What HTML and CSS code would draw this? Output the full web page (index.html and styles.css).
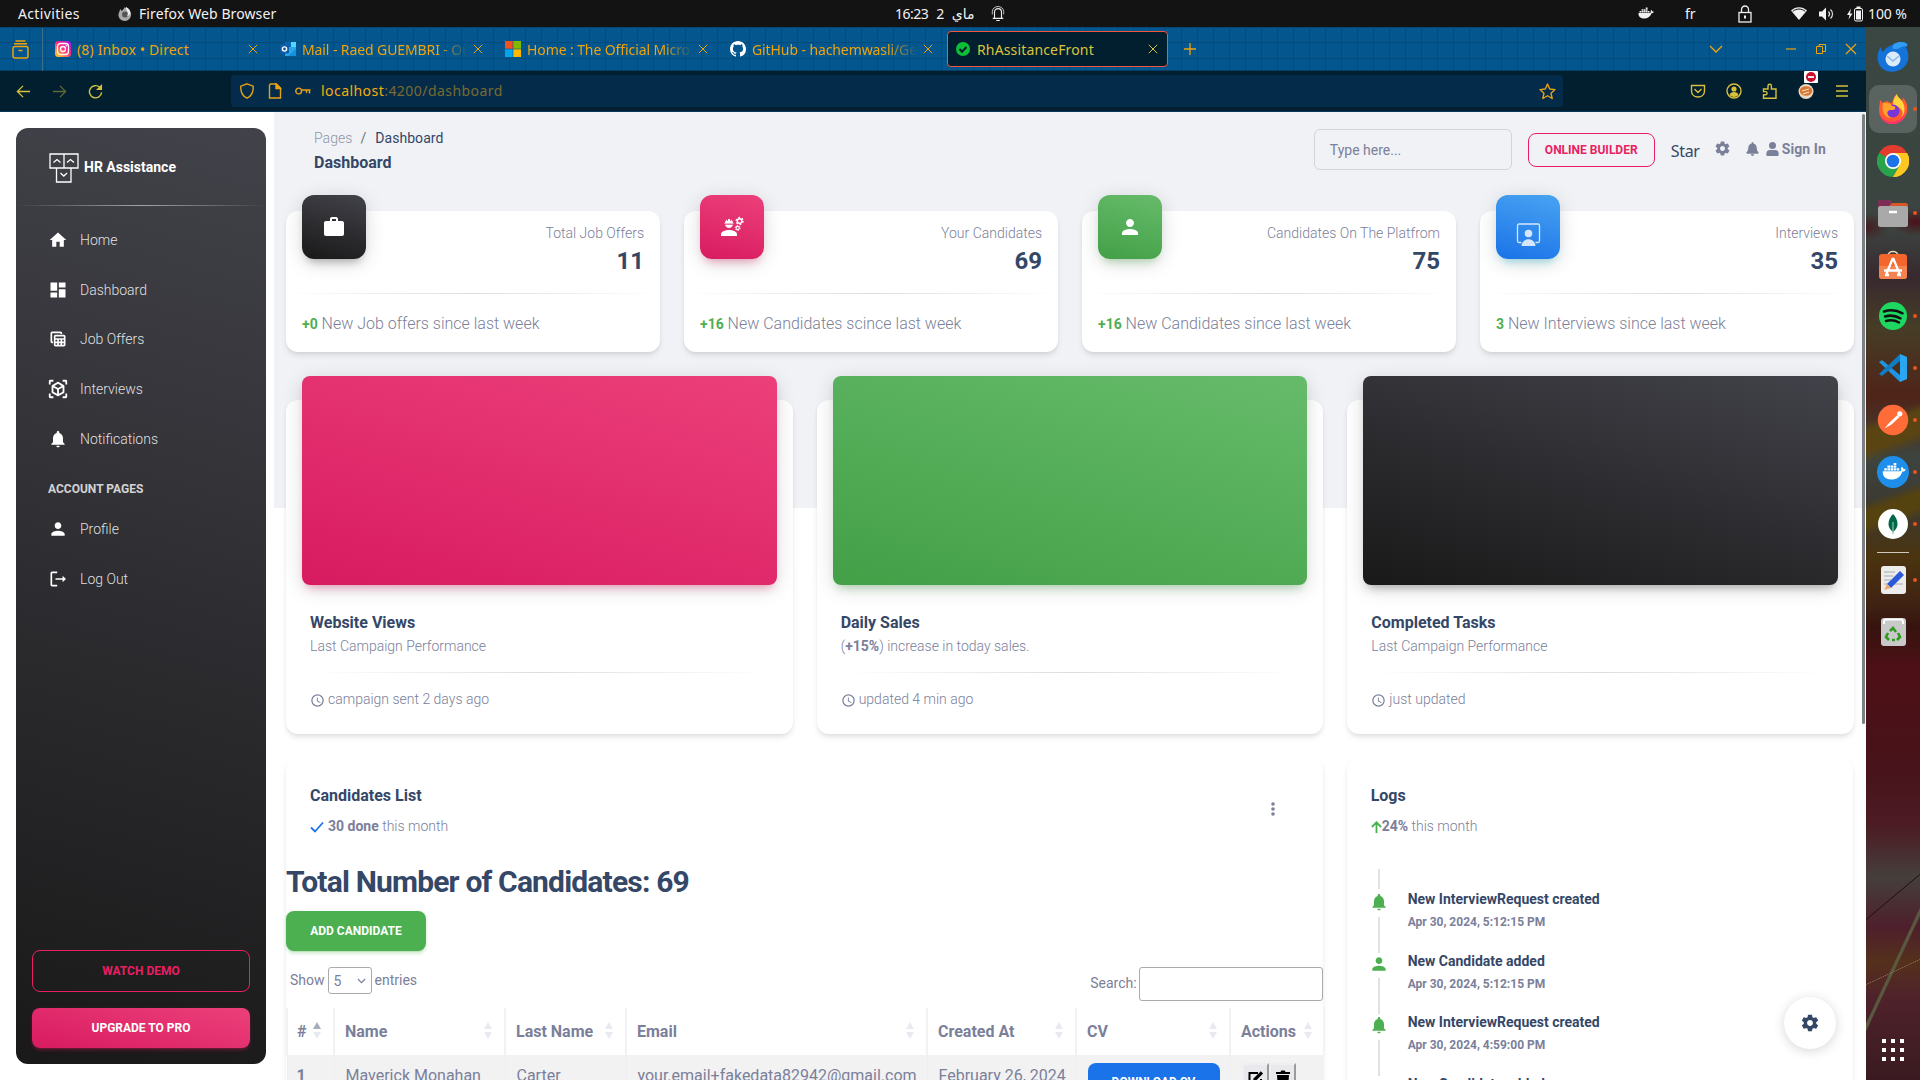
FILE: index.html
```html
<!DOCTYPE html>
<html lang="en">
<head>
<meta charset="utf-8">
<title>RhAssitanceFront</title>
<link rel="stylesheet" href="styles.css">
</head>
<body>
<svg class="sprite" aria-hidden="true">
  <symbol id="i-home" viewBox="0 0 24 24"><path d="M10 20v-6h4v6h5v-8h3L12 3 2 12h3v8z"/></symbol>
  <symbol id="i-dash" viewBox="0 0 24 24"><path d="M3 13h8V3H3v10zm0 8h8v-6H3v6zm10 0h8V11h-8v10zm0-18v6h8V3h-8z"/></symbol>
  <symbol id="i-table" viewBox="0 0 24 24"><path d="M19 7H9c-1.100 0-2 .9-2 2v10c0 1.100.9 2 2 2h10c1.100 0 2-.9 2-2V9c0-1.100-.9-2-2-2zm0 2v2H9V9h10zm-6 6v-2h2v2h-2zm2 2v2h-2v-2h2zm-4-2H9v-2h2v2zm6-2h2v2h-2v-2zm-8 4h2v2H9v-2zm8 2v-2h2v2h-2zM6 17H5c-1.100 0-2-.9-2-2V5c0-1.100.9-2 2-2h10c1.100 0 2 .9 2 2v1h-2V5H5v10h1v2z"/></symbol>
  <symbol id="i-ar" viewBox="0 0 24 24"><path d="M18.250 7.600l-5.500-3.180c-.46-.27-1.040-.27-1.500 0L5.750 7.600c-.46.27-.75.76-.75 1.300v6.350c0 .54.290 1.030.75 1.300l5.500 3.180c.46.27 1.040.27 1.500 0l5.500-3.180c.46-.27.75-.76.75-1.300V8.900c0-.54-.29-1.030-.75-1.300zM7 14.960v-4.620l4 2.320v4.610l-4-2.310zm5-4.030L8 8.610l4-2.310 4 2.310-4 2.320zm1 6.340v-4.610l4-2.320v4.620l-4 2.310zM7 2H3.500C2.670 2 2 2.670 2 3.500V7h2V4h3V2zm10 0h3.500c.83 0 1.500.67 1.500 1.500V7h-2V4h-3V2zM7 22H3.500c-.83 0-1.500-.67-1.500-1.500V17h2v3h3v2zm10 0h3.500c.83 0 1.500-.67 1.500-1.500V17h-2v3h-3v2z"/></symbol>
  <symbol id="i-bell" viewBox="0 0 24 24"><path d="M12 22c1.100 0 2-.9 2-2h-4c0 1.100.89 2 2 2zm6-6v-5c0-3.070-1.640-5.640-4.500-6.320V4c0-.83-.67-1.500-1.500-1.500s-1.500.67-1.500 1.500v.68C7.630 5.360 6 7.920 6 11v5l-2 2v1h16v-1l-2-2z"/></symbol>
  <symbol id="i-person" viewBox="0 0 24 24"><path d="M12 12c2.210 0 4-1.790 4-4s-1.790-4-4-4-4 1.790-4 4 1.790 4 4 4zm0 2c-2.670 0-8 1.340-8 4v2h16v-2c0-2.660-5.330-4-8-4z"/></symbol>
  <symbol id="i-logout" viewBox="0 0 24 24"><path d="M11 3H5c-1.100 0-2 .9-2 2v14c0 1.100.9 2 2 2h6v-2H5V5h6V3zm6.500 5v3H9v2h8.500v3l4-4-4-4z"/></symbol>
  <symbol id="i-bag" viewBox="0 0 24 24"><path d="M20 6h-4V4c0-1.110-.89-2-2-2h-4c-1.110 0-2 .89-2 2v2H4c-1.110 0-2 .89-2 2v11c0 1.110.89 2 2 2h16c1.110 0 2-.89 2-2V8c0-1.110-.89-2-2-2zm-6 0h-4V4h4v2z"/></symbol>
  <symbol id="i-engineer" viewBox="0 0 24 24"><path d="M9 15c-2.670 0-8 1.340-8 4v2h16v-2c0-2.660-5.330-4-8-4zM4.740 9H5c0 2.210 1.790 4 4 4s4-1.790 4-4h.26c.27 0 .49-.22.49-.49v-.02c0-.27-.22-.49-.49-.49H13c0-1.480-.81-2.750-2-3.450v.95c0 .28-.22.5-.5.500s-.5-.22-.5-.5V4.140C9.680 4.060 9.350 4 9 4s-.68.060-1 .14V5.500c0 .28-.22.500-.5.500S7 5.780 7 5.500v-.95C5.810 5.250 5 6.520 5 8h-.26c-.27 0-.49.22-.49.490v.030c0 .26.22.480.490.480z"/><path d="M4.200 8.600h9.600v1.100H4.200z" fill="#e4306e"/><circle cx="19.600" cy="6" r="2.300" fill="none" stroke="currentColor" stroke-width="1.500"/><circle cx="19.600" cy="6" r="3.500" fill="none" stroke="currentColor" stroke-width="1.300" stroke-dasharray="1.800 1.865"/><circle cx="17.700" cy="13" r="1.600" fill="none" stroke="currentColor" stroke-width="1.100"/><circle cx="17.700" cy="13" r="2.500" fill="none" stroke="currentColor" stroke-width="1" stroke-dasharray="1.300 1.318"/></symbol>
  <symbol id="i-gear" viewBox="0 0 24 24"><path d="M19.430 12.980c.04-.32.070-.64.070-.98s-.03-.66-.07-.98l2.110-1.650c.19-.15.240-.42.120-.64l-2-3.460c-.12-.22-.39-.3-.61-.22l-2.490 1c-.52-.4-1.080-.73-1.690-.98l-.38-2.650C14.460 2.180 14.250 2 14 2h-4c-.25 0-.46.180-.49.420l-.38 2.650c-.61.250-1.170.590-1.690.980l-2.490-1c-.23-.09-.49 0-.61.220l-2 3.460c-.13.220-.07.490.120.640l2.110 1.650c-.04.320-.07.650-.07.980s.03.660.070.980l-2.110 1.650c-.19.150-.24.420-.12.640l2 3.460c.12.220.39.300.610.220l2.490-1c.52.400 1.080.730 1.690.980l.38 2.650c.03.240.240.420.490.420h4c.25 0 .46-.18.490-.42l.38-2.650c.61-.25 1.170-.59 1.690-.98l2.490 1c.23.090.49 0 .61-.22l2-3.460c.12-.22.070-.49-.12-.64l-2.110-1.650zM12 15.500c-1.930 0-3.500-1.570-3.500-3.500s1.570-3.500 3.500-3.500 3.500 1.570 3.500 3.500-1.570 3.500-3.500 3.500z"/></symbol>
  <symbol id="i-clock" viewBox="0 0 24 24"><path d="M12 2a10 10 0 1 0 0 20 10 10 0 0 0 0-20zm0 18a8 8 0 1 1 0-16 8 8 0 0 1 0 16zm.5-13H11v6l5.250 3.150.75-1.230-4.500-2.670z"/></symbol>
  <symbol id="i-x" viewBox="0 0 10 10"><path d="M.8.8l8.400 8.400M9.200.8L.8 9.200" fill="none" stroke="currentColor" stroke-width="1"/></symbol>
  <symbol id="i-docker" viewBox="0 0 32 24"><path d="M1 11h23c2 0 2-3 1-4 1-1 1.500-2 1.500-2s2 1 2 3c1.500-.3 2.500 0 3 .5-.5 2-2.500 3-4.500 3C25 18 20 22 12 22 4 22 .5 17 1 11zM3 7h3.500v3H3zM7.200 7h3.500v3H7.200zM11.400 7h3.500v3h-3.500zM15.600 7h3.500v3h-3.500zM19.800 7h3.200v3h-3.200zM7.200 3.400h3.500v3H7.200zM11.400 3.400h3.500v3h-3.500zM15.600 3.400h3.500v3h-3.500zM15.600 0h3.500v2.800h-3.500z"/></symbol>
</svg>

<header class="topbar">
  <span class="activities">Activities</span>
  <svg class="tb-fox" viewBox="0 0 16 16"><path d="M8 1c1 2 5 2 6 6 .8 4-2 8-6 8s-7-3-6.500-7C2 6 3 5 3 3l2 2c1-1 2-3 3-4z" fill="#a9a9a9"/><circle cx="8" cy="8.500" r="3" fill="#555"/><path d="M9 1c-1 3 4 5 1 9 5-1 4-7-1-9z" fill="#eee"/></svg>
  <span class="app">Firefox Web Browser</span>
  <span class="clock"><span>16:23</span><span>2</span><bdi>ماي</bdi></span>
  <svg class="tb-bell" viewBox="0 0 16 18" fill="none" stroke="#eee" stroke-width="1.300"><path d="M2 14.500h12M4 14V7.500a4 4 0 0 1 8 0V14M6 17h4"/><path d="M1.500 10V6.500C1.700 3.500 4.500 1 8 1s6.300 2.500 6.500 5.500V10" stroke-width=".9"/></svg>
  <svg class="tb-docker"><use href="#i-docker"/></svg>
  <span class="lang">fr</span>
  <svg class="tb-lock" viewBox="0 0 14 18" fill="none" stroke="#eee" stroke-width="1.300"><rect x="1" y="7.500" width="12" height="9.500"/><path d="M3.500 7V4.500a3.500 3.500 0 0 1 7 0V7"/><path d="M7 10.500v3" stroke-width="2"/></svg>
  <svg class="tb-wifi" viewBox="0 0 16 13"><path d="M0 3.500C4.500-1 11.500-1 16 3.500L8 13z" fill="#f2f2f2"/><path d="M1.800 4.300c3.800-3 8.600-3 12.400 0" stroke="#131313" fill="none"/></svg>
  <svg class="tb-vol" viewBox="0 0 16 14"><path d="M0 4.500h3L7 .5v13L3 9.500H0z" fill="#f2f2f2"/><path d="M9.500 4.500c1.300 1.500 1.300 3.500 0 5M11.500 2.500c2.700 2.500 2.700 6.500 0 9" stroke="#ddd" fill="none" stroke-width="1.200"/></svg>
  <svg class="tb-bat" viewBox="0 0 16 15"><path d="M4 2L0 8.500h2.500L1.500 13l4-6H3z" fill="#f2f2f2"/><rect x="7.500" y="2" width="8" height="12.500" rx="1.500" fill="none" stroke="#f2f2f2"/><path d="M9 4h5v9H9zM9.500 0h4v1.500h-4z" fill="#f2f2f2"/></svg>
  <span class="pct">100 %</span>
</header>

<div class="desktop">
<main class="window">
  <div class="tabbar">
    <svg class="archive" viewBox="0 0 17 19" fill="none" stroke="currentColor" stroke-width="1.500"><rect x="1" y="6.500" width="15" height="11.500" rx="2"/><path d="M2 3.800h13M3.500 1h10M6.500 10.500h4"/></svg>
    <div class="tabs">
      <div class="tab"><svg class="fav" viewBox="0 0 16 16"><defs><linearGradient id="ig" x1="1" y1="0" x2=".2" y2="1"><stop offset="0" stop-color="#8a1cff"/><stop offset=".45" stop-color="#ff1f8f"/><stop offset="1" stop-color="#ffc020"/></linearGradient></defs><rect width="16" height="16" rx="3.500" fill="url(#ig)"/><rect x="2.500" y="2.500" width="11" height="11" rx="3" fill="none" stroke="#fff" stroke-width="1.300"/><circle cx="8" cy="8" r="2.500" fill="none" stroke="#fff" stroke-width="1.300"/><circle cx="11.300" cy="4.700" r=".8" fill="#fff"/></svg><span class="t">(8) Inbox • Direct</span><svg class="x"><use href="#i-x"/></svg></div>
      <div class="tab"><svg class="fav" viewBox="0 0 16 16"><rect x="5" y="1" width="11" height="14" fill="#28a8ea"/><path d="M5 1h6v5H5z" fill="#0a64b4"/><path d="M11 1h5v5h-5z" fill="#50d9ff"/><path d="M16 8l-8 7h8z" fill="#1490df"/><rect y="3.500" width="9" height="9" rx="1" fill="#0f5ca8"/><circle cx="4.500" cy="8" r="2.100" fill="none" stroke="#fff" stroke-width="1.400"/></svg><span class="t fade">Mail - Raed GUEMBRI - Out</span><svg class="x"><use href="#i-x"/></svg></div>
      <div class="tab"><svg class="fav" viewBox="0 0 16 16"><path fill="#f25022" d="M0 0h7.700v7.700H0z"/><path fill="#7fba00" d="M8.300 0H16v7.700H8.300z"/><path fill="#00a4ef" d="M0 8.300h7.700V16H0z"/><path fill="#ffb900" d="M8.300 8.300H16V16H8.300z"/></svg><span class="t fade">Home : The Official Micros</span><svg class="x"><use href="#i-x"/></svg></div>
      <div class="tab"><svg class="fav" viewBox="0 0 16 16"><path fill="#fff" d="M8 0C3.580 0 0 3.580 0 8c0 3.540 2.290 6.530 5.470 7.590.4.070.55-.17.55-.38 0-.19-.01-.82-.01-1.490-2.010.37-2.530-.49-2.690-.94-.09-.23-.48-.94-.82-1.130-.28-.15-.68-.52-.01-.53.63-.01 1.080.58 1.230.82.72 1.210 1.870.87 2.330.66.070-.52.280-.87.510-1.070-1.780-.2-3.640-.89-3.640-3.950 0-.87.310-1.590.82-2.150-.08-.2-.36-1.020.08-2.120 0 0 .67-.21 2.200.82.64-.18 1.320-.27 2-.27s1.360.09 2 .27c1.530-1.040 2.200-.82 2.200-.82.44 1.100.16 1.920.08 2.120.51.560.82 1.270.82 2.150 0 3.070-1.870 3.750-3.650 3.950.29.250.54.730.54 1.480 0 1.070-.01 1.930-.01 2.200 0 .21.150.46.550.38A8.010 8.010 0 0 0 16 8c0-4.420-3.580-8-8-8z"/></svg><span class="t fade">GitHub - hachemwasli/Ges</span><svg class="x"><use href="#i-x"/></svg></div>
      <div class="tab active"><svg class="fav" viewBox="0 0 16 16"><circle cx="8" cy="8" r="7" fill="#0cbf35"/><path d="M4.500 8l2.500 2.700L11.500 6" stroke="#04202f" stroke-width="2" fill="none"/></svg><span class="t">RhAssitanceFront</span><svg class="x"><use href="#i-x"/></svg></div>
    </div>
    <svg class="plus" viewBox="0 0 12 12"><path d="M6 0v12M0 6h12" stroke="currentColor" stroke-width="1.300"/></svg>
    <svg class="chev" viewBox="0 0 14 8"><path d="M1 1l6 6 6-6" fill="none" stroke="currentColor" stroke-width="1.400"/></svg>
    <svg class="wctl" viewBox="0 0 12 12"><path d="M1 6h10" stroke="currentColor" stroke-width="1.200"/></svg>
    <svg class="wctl" viewBox="0 0 12 12" fill="none" stroke="currentColor"><path d="M1.500 3.500h6v7h-6zM4 3.500v-2h6.500v7h-3"/></svg>
    <svg class="wctl"><use href="#i-x"/></svg>
  </div>

  <div class="navbar">
    <svg class="nb" viewBox="0 0 16 16"><path d="M15 8H1.500M7.500 2l-6 6 6 6" fill="none" stroke="currentColor" stroke-width="1.400"/></svg>
    <svg class="nb off" viewBox="0 0 16 16"><path d="M1 8h13.500M8.500 2l6 6-6 6" fill="none" stroke="currentColor" stroke-width="1.400"/></svg>
    <svg class="nb" viewBox="0 0 16 16"><path d="M12.500 3.500A6.500 6.500 0 1 0 14.500 9" fill="none" stroke="currentColor" stroke-width="1.500"/><path d="M15 0v6.500H8.500z" fill="currentColor"/></svg>
    <div class="urlbar">
      <svg class="u" viewBox="0 0 16 16" fill="none" stroke="currentColor" stroke-width="1.400"><path d="M8 .8l6.200 2.400c.4 5-1.800 9.800-6.200 12C3.600 13 1.400 8.200 1.800 3.200z"/></svg>
      <svg class="u" viewBox="0 0 16 16" fill="none" stroke="currentColor" stroke-width="1.400"><path d="M3.500 1h6l4 4v10h-11V2z"/><path d="M9 1v4.500h4.500z" fill="currentColor"/></svg>
      <svg class="u" viewBox="0 0 16 16" fill="none" stroke="currentColor" stroke-width="1.400"><circle cx="3.700" cy="8" r="2.900"/><path d="M6.600 7H15.500M14.500 7v3.500M11.500 7v3"/></svg>
      <span class="url">localhost<i>:4200/dashboard</i></span>
      <svg class="star" viewBox="0 0 16 16"><path d="M8 1l2.100 4.700 5 .5-3.800 3.400 1.100 5L8 12l-4.400 2.600 1.100-5L.9 6.200l5-.5z" fill="none" stroke="currentColor" stroke-width="1.300" stroke-linejoin="round"/></svg>
    </div>
    <div class="tools">
      <svg viewBox="0 0 16 16" fill="none" stroke="currentColor" stroke-width="1.400"><path d="M1.500 2.500h13V8c0 8-13 8-13 0zM4.500 6L8 9.500 11.500 6"/></svg>
      <svg viewBox="0 0 16 16"><circle cx="8" cy="8" r="7" fill="none" stroke="currentColor" stroke-width="1.400"/><circle cx="8" cy="6" r="2.600" fill="currentColor"/><path d="M3.500 12c.5-4 8.500-4 9 0-2 2.500-7 2.500-9 0z" fill="currentColor"/></svg>
      <svg viewBox="0 0 16 16" fill="none" stroke="currentColor" stroke-width="1.400"><path d="M1.500 6H6V3a1.700 1.700 0 0 1 3.400 0v3H14v9.300H1.500v-3.500h2a1.600 1.600 0 0 0 0-3.200h-2z"/></svg>
      <span class="ext"><svg viewBox="0 0 16 16"><circle cx="8" cy="8.500" r="7.500" fill="#e9d9c6"/><ellipse cx="8" cy="8" rx="6.200" ry="4.800" fill="#d9772f"/><path d="M4 8l7-2M5 11l6-2" stroke="#fbe8d0"/></svg><b><svg viewBox="0 0 12 12"><circle cx="6" cy="6" r="5" fill="#c8102e"/><path d="M3 6h6" stroke="#fff" stroke-width="1.800"/></svg></b></span>
      <svg viewBox="0 0 16 16"><path d="M2 3h12M2 8h12M2 13h12" stroke="currentColor" stroke-width="1.500"/></svg>
    </div>
  </div>

  <div class="page">
    <aside class="side">
      <div class="brand">
        <svg viewBox="0 0 30 30" fill="none" stroke="#fff" stroke-width="1.300"><path d="M1 1h28v14H1zM15 1v14M7.500 15h14.500v14H7.500zM4.500 9.500l3.500-3 3.500 3M18 9.500l3.500-3 3.500 3M11.500 20l3.300 3 3.300-3"/></svg>
        <span>HR Assistance</span>
      </div>
      <hr class="hr-light">
      <nav>
        <a><svg><use href="#i-home"/></svg>Home</a>
        <a><svg><use href="#i-dash"/></svg>Dashboard</a>
        <a><svg><use href="#i-table"/></svg>Job Offers</a>
        <a><svg class="wide"><use href="#i-ar"/></svg>Interviews</a>
        <a><svg><use href="#i-bell"/></svg>Notifications</a>
        <h6>ACCOUNT PAGES</h6>
        <a><svg><use href="#i-person"/></svg>Profile</a>
        <a><svg><use href="#i-logout"/></svg>Log Out</a>
      </nav>
      <div class="side-foot">
        <a class="btn demo">WATCH DEMO</a>
        <a class="btn pro">UPGRADE TO PRO</a>
      </div>
    </aside>

    <section class="main">
      <div class="head">
        <div class="crumbs">
          <p><span>Pages</span><em>/</em>Dashboard</p>
          <h6>Dashboard</h6>
        </div>
        <div class="type">Type here...</div>
        <a class="builder">ONLINE BUILDER</a>
        <span class="starlink">Star</span>
        <svg class="h-gear"><use href="#i-gear"/></svg>
        <svg class="h-bell" viewBox="0 0 14 16"><path d="M7 0a1 1 0 0 0-1 1v.6C3.700 2.100 2.200 4 2.200 6.300c0 3.200-1 4.400-2 5.500-.5.600-.1 1.600.8 1.600h12c.9 0 1.300-1 .8-1.600-1-1.100-2-2.300-2-5.500C11.800 4 10.300 2.100 8 1.600V1a1 1 0 0 0-1-1zM5 14h4a2 2 0 0 1-4 0z"/></svg>
        <svg class="h-user" viewBox="0 0 14 16"><path d="M7 8a4 4 0 1 0 0-8 4 4 0 0 0 0 8zm3 1H4a4 4 0 0 0-4 4v1.500c0 .8.700 1.500 1.500 1.500h11c.8 0 1.500-.7 1.500-1.500V13a4 4 0 0 0-4-4z"/></svg>
        <span class="sign">Sign In</span>
      </div>

      <div class="stats">
        <div class="card stat"><div class="stat-top"><span class="box dark"><svg><use href="#i-bag"/></svg></span><div><p>Total Job Offers</p><h4>11</h4></div></div><hr class="hr-dark"><p class="foot"><b>+0</b> New Job offers since last week</p></div>
        <div class="card stat"><div class="stat-top"><span class="box pink"><svg><use href="#i-engineer"/></svg></span><div><p>Your Candidates</p><h4>69</h4></div></div><hr class="hr-dark"><p class="foot"><b>+16</b> New Candidates scince last week</p></div>
        <div class="card stat"><div class="stat-top"><span class="box green"><svg><use href="#i-person"/></svg></span><div><p>Candidates On The Platfrom</p><h4>75</h4></div></div><hr class="hr-dark"><p class="foot"><b>+16</b> New Candidates since last week</p></div>
        <div class="card stat"><div class="stat-top"><span class="box blue"><svg class="big" viewBox="0 0 24 24"><path d="M5 19.500H2.500A1.500 1.500 0 0 1 1 18V2.500A1.500 1.500 0 0 1 2.500 1h19A1.500 1.500 0 0 1 23 2.500V18a1.500 1.500 0 0 1-1.500 1.500H19" fill="none" stroke="currentColor" stroke-width="1.300"/><circle cx="12" cy="10.500" r="3.800"/><path d="M5 23c.5-9 13.500-9 14 0z"/></svg></span><div><p>Interviews</p><h4>35</h4></div></div><hr class="hr-dark"><p class="foot"><b>3</b> New Interviews since last week</p></div>
      </div>

      <div class="charts">
        <div class="card chart"><div class="plot pink"></div><h6>Website Views</h6><p>Last Campaign Performance</p><hr class="hr-dark"><p class="when"><svg><use href="#i-clock"/></svg>campaign sent 2 days ago</p></div>
        <div class="card chart"><div class="plot green"></div><h6>Daily Sales</h6><p>(<b>+15%</b>) increase in today sales.</p><hr class="hr-dark"><p class="when"><svg><use href="#i-clock"/></svg>updated 4 min ago</p></div>
        <div class="card chart"><div class="plot dark"></div><h6>Completed Tasks</h6><p>Last Campaign Performance</p><hr class="hr-dark"><p class="when"><svg><use href="#i-clock"/></svg>just updated</p></div>
      </div>

      <div class="bottom">
        <div class="card list">
          <div class="list-head">
            <div><h6>Candidates List</h6>
            <p><svg class="check" viewBox="0 0 14 12"><path d="M1 6.500l4 4L13 1.500" fill="none" stroke="#1a73e8" stroke-width="1.800"/></svg><span><b>30 done</b> this month</span></p></div>
            <svg class="kebab" viewBox="0 0 4 14"><circle cx="2" cy="2" r="1.800"/><circle cx="2" cy="7" r="1.800"/><circle cx="2" cy="12" r="1.800"/></svg>
          </div>
          <h3>Total Number of Candidates: 69</h3>
          <a class="btn add">ADD CANDIDATE</a>
          <div class="filters">
            <label class="show">Show <span class="select">5<svg viewBox="0 0 10 6"><path d="M1 .8l4 4 4-4" fill="none" stroke="currentColor" stroke-width="1.300"/></svg></span> entries</label>
            <label class="search">Search:<span class="field"></span></label>
          </div>
          <table>
            <colgroup><col class="c1"><col class="c2"><col class="c3"><col class="c4"><col class="c5"><col class="c6"><col class="c7"></colgroup>
            <thead><tr><th class="asc">#</th><th>Name</th><th>Last Name</th><th>Email</th><th>Created At</th><th>CV</th><th>Actions</th></tr></thead>
            <tbody><tr><td><b>1</b></td><td>Maverick Monahan</td><td>Carter</td><td>your.email+fakedata82942@gmail.com</td><td>February 26, 2024</td><td><a class="btn dl">DOWNLOAD CV</a></td><td><span class="acts"><span><svg viewBox="0 0 16 16"><path d="M10 3H1.500v11.500H13V9" fill="none" stroke="#000" stroke-width="2"/><path d="M5.500 8.500L12.800 1.200l2.300 2.300-7.300 7.300-2.800.5z"/></svg></span><span><svg viewBox="0 0 16 16"><path d="M1 2h4.500l.8-1.500h3.400l.8 1.500H15v2H1zM2 5h12l-.8 11H2.800z"/></svg></span></span></td></tr></tbody>
          </table>
        </div>
        <div class="card logs">
          <h6>Logs</h6>
          <p><svg class="up" viewBox="0 0 12 14"><path d="M6 13.500V2M1 7l5-5 5 5" fill="none" stroke="#4caf50" stroke-width="2"/></svg><span><b>24%</b> this month</span></p>
          <ul>
            <li><svg><use href="#i-bell"/></svg><div><b>New InterviewRequest created</b><small>Apr 30, 2024, 5:12:15 PM</small></div></li>
            <li><svg><use href="#i-person"/></svg><div><b>New Candidate added</b><small>Apr 30, 2024, 5:12:15 PM</small></div></li>
            <li><svg><use href="#i-bell"/></svg><div><b>New InterviewRequest created</b><small>Apr 30, 2024, 4:59:00 PM</small></div></li>
            <li><svg><use href="#i-person"/></svg><div><b>New Candidate added</b><small>Apr 30, 2024, 4:59:00 PM</small></div></li>
          </ul>
        </div>
      </div>
    </section>
    <span class="scrollbar"></span>
    <span class="fab"><svg><use href="#i-gear"/></svg></span>
  </div>
</main>

<aside class="dock">
  <span class="app-i"><svg viewBox="0 0 32 32"><path d="M17 3c7-4 14-1 14 1l-2 2c4 8 3 16-3 21C18 33 6 32 2 23-1 16 1 10 4 6c0 3 1 4 2 5 3-5 7-6 11-8z" fill="#1373d9"/><path d="M17 3c7-4 14-1 13 2-7 0-8 4-13 3-2 0-2-3 0-5z" fill="#2f9df4"/><circle cx="16" cy="18" r="7.500" fill="#dcebfb"/><path d="M10 15l6 5 6-5" fill="none" stroke="#8bb8e6" stroke-width="1.500"/></svg></span>
  <span class="app-i sel run"><svg viewBox="0 0 32 32"><path d="M3 7l3 3c1-1 3-2 4-2 1 0 2 2 5 2 1-4 2-7 5-9 0 3 3 4 5 7 1-1 1-2 0-4 5 4 6 10 5 15-2 8-8 12-15 12C7 31 2 24 2 17c0-4 1-7 1-10z" fill="#ff5a30"/><path d="M20 1c0 3 3 4 5 7 4 6 3 13-1 17 5-9-3-11-8-13 0-4 1-8 4-11z" fill="#ffd43a"/><circle cx="16" cy="18" r="6.500" fill="#7a35d8"/><path d="M6 10c4-1 8 0 9 3 3 0 4 1 3 3-2 2-5 0-7 2-2 3 1 6 4 7-7 0-11-6-9-15z" fill="#ffa22c"/><path d="M3 21c3 7 10 9 16 7 4-1 7-4 9-8-1 7-6 11-12 11-7 0-12-4-13-10z" fill="#ff2f74"/></svg></span>
  <span class="app-i"><svg viewBox="0 0 32 32"><path d="M16 16L2.100 8A16 16 0 0 1 29.900 8z" fill="#e33b2e"/><path d="M16 16L2.100 8A16 16 0 0 0 16 32z" fill="#2ba24c"/><path d="M16 16l14-8a16 16 0 0 1-14 24l7-12z" fill="#fcc71f"/><path d="M2.100 8L9 20l7 12 7-12-7-4z" fill="#2ba24c"/><path d="M23 20l-7 12A16 16 0 0 0 29.900 8H16z" fill="#fcc71f"/><circle cx="16" cy="16" r="8" fill="#fff"/><circle cx="16" cy="16" r="6.300" fill="#1a73e8"/></svg></span>
  <span class="app-i run"><svg viewBox="0 0 32 32"><path d="M1 6c0-2 1-3 3-3h8l3 3h14c1 0 2 1 2 2v6H1z" fill="#d9562b"/><path d="M1 6c0-2 1-3 3-3h8l3 3-5 5H1z" fill="#7c2d56"/><rect x="1" y="9" width="30" height="21" rx="2.500" fill="#a9a9a9"/><path d="M12 15h8" stroke="#fff" stroke-width="2.500"/></svg></span>
  <span class="app-i"><svg viewBox="0 0 32 32"><path d="M11 7c0-6 10-6 10 0" fill="none" stroke="#e8d6b5" stroke-width="1.600"/><rect x="2" y="5" width="28" height="25" rx="3" fill="#f4662e"/><path d="M2 17h28v10a3 3 0 0 1-3 3H5a3 3 0 0 1-3-3z" fill="#f58350"/><path d="M9 26l6.500-16h1L23 26M7 21.500h18M8 26h4M20 26h4" stroke="#fff" stroke-width="2.300" fill="none"/></svg></span>
  <span class="app-i run"><svg viewBox="0 0 32 32"><circle cx="16" cy="16" r="14" fill="#1ed760"/><path d="M7 11.500c6-2 13-1.300 18.500 1.800M8 16.500c5-1.500 10.500-1 15.500 1.800M9 21c4.500-1.300 9-.8 13 1.500" stroke="#111" stroke-width="2.500" fill="none" stroke-linecap="round"/></svg></span>
  <span class="app-i run"><svg viewBox="0 0 32 32"><path d="M2 10l3-2 18 15v7z" fill="#1f94e0"/><path d="M2 22l3 2L23 9V2z" fill="#0f7cc4"/><path d="M23 2l7 3v22l-7 3z" fill="#2aa7f2"/></svg></span>
  <span class="app-i run"><svg viewBox="0 0 32 32"><circle cx="16" cy="16" r="15.200" fill="#ff6c37"/><path d="M7.500 24.500l5-6 8-7.500 2 2-8 7.500z" fill="#fff"/><circle cx="22.800" cy="9.800" r="2.600" fill="#fff"/></svg></span>
  <span class="app-i run"><svg viewBox="0 0 32 32"><circle cx="16" cy="16" r="16" fill="#1d8feb"/><svg class="whale" x="5" y="7" width="24" height="18"><use href="#i-docker"/></svg></svg></span>
  <span class="app-i run"><svg viewBox="0 0 32 32"><circle cx="16" cy="16" r="15" fill="#fff"/><path d="M16 6c6 6 6 14 0 18-6-4-6-12 0-18z" fill="#00684a"/><path d="M16 14v12" stroke="#8fbda9" stroke-width="1.200"/></svg></span>
  <i class="rule"></i>
  <span class="app-i run"><svg viewBox="0 0 32 32"><rect x="4" y="2" width="25" height="28" rx="3" fill="#ececec"/><path d="M7 8h11M7 12h9M7 16h7M7 20h19" stroke="#aaa"/><path d="M10 20L23 7l4 4-13 13z" fill="#2b59d8"/><path d="M10 20l4 4-7 2z" fill="#eea868"/></svg></span>
  <span class="app-i"><svg viewBox="0 0 32 32"><rect x="4" y="2" width="25" height="28" rx="3" fill="#c9c9c9"/><path d="M7 8V6c0-2 1-2.500 2-2.500h15c1 0 2 .5 2 2.500v2" stroke="#fff" stroke-width="2" fill="none"/><path d="M13 15l3-3 3 4M21 17l2 4-3 3M18 24h-3M12 24l-3-3 2-4" fill="none" stroke="#2f9a1f" stroke-width="2.600"/></svg></span>
  <svg class="grid" viewBox="0 0 22 22"><path d="M0 0h4v4H0zM9 0h4v4H9zM18 0h4v4h-4zM0 9h4v4H0zM9 9h4v4H9zM18 9h4v4h-4zM0 18h4v4H0zM9 18h4v4H9zM18 18h4v4h-4z" fill="#fff"/></svg>
</aside>
</div>
</body>
</html>
```
FILE: styles.css
```css
* { box-sizing: border-box; }
body { margin: 0; width: 1920px; height: 1080px; overflow: hidden; font-family: Roboto, "Liberation Sans", sans-serif; font-weight: 300; color: #7b809a; background: #fff; }
h3, h4, h6, p, ul { margin: 0; padding: 0; font-weight: 300; }
b { font-weight: 700; }
svg { display: block; flex: none; fill: currentColor; }
svg[fill="none"] { fill: none; }
.sprite { position: absolute; width: 0; height: 0; }
.desktop { display: flex; height: 1053px; }
.window { width: 1866px; height: 1053px; overflow: hidden; }

/* system bar */
.topbar { display: flex; align-items: center; height: 27px; background: #131313; color: #f2f2f2; font: 400 14px/27px "Noto Sans", "DejaVu Sans", sans-serif; white-space: nowrap; }
.activities { width: 99px; padding-left: 18px; letter-spacing: .35px; }
.tb-fox { width: 16px; height: 16px; margin: 0 6px 0 18px; }
.app { width: 756px; letter-spacing: .1px; }
.clock { display: flex; gap: 8px; width: 78px; letter-spacing: -.5px; }
.tb-bell { width: 14px; height: 17px; margin-left: 18px; }
.tb-docker { width: 16px; height: 13px; margin-left: 633px; }
.lang { width: 20px; margin-left: 31px; }
.tb-lock { width: 14px; height: 18px; margin-left: 33px; }
.tb-wifi { width: 16px; height: 13px; margin-left: 39px; }
.tb-vol { width: 16px; height: 14px; margin-left: 12px; }
.tb-bat { width: 16px; height: 16px; margin-left: 12px; }
.pct { margin-left: 5px; letter-spacing: -.1px; }

/* browser chrome */
.tabbar { display: flex; align-items: center; height: 44px; border-top: 1px solid #044977; border-bottom: 1px solid #033f66; background-color: #04568f; background-image: linear-gradient(90deg, transparent 13px, #044a7a 13px, #044a7a 14px, transparent 14px), linear-gradient(#0000 14px, #044a7a 14px, #044a7a 15px, #0000 15px); background-size: 16px 100%, 100% 16px; color: #f0a30a; font: 400 14px/37px "Noto Sans", sans-serif; }
.archive { width: 17px; height: 19px; margin: 0 13px 0 12px; }
.tabs { display: flex; gap: 4px; padding-left: 4px; border-left: 1px solid #3f6f86; height: 43px; align-items: center; }
.tab { display: flex; align-items: center; width: 221px; height: 36px; padding: 0 10px 0 8px; border-radius: 4px; }
.tab.active { background: #021f30; border: 1px solid #f2553a; padding: 0 9px 0 7px; color: #dcc33c; }
.fav { width: 16px; height: 16px; margin-right: 6px; }
.t { width: 171px; height: 36px; overflow: hidden; white-space: nowrap; letter-spacing: .15px; }
.fade { letter-spacing: -.1px; -webkit-mask-image: linear-gradient(90deg, #000 135px, transparent 166px); mask-image: linear-gradient(90deg, #000 135px, transparent 166px); }
.tab .x { width: 10px; height: 10px; }
.plus { width: 12px; height: 12px; margin-left: 16px; }
.chev { width: 14px; height: 8px; margin-left: auto; margin-right: 62px; }
.wctl { width: 12px; height: 12px; margin-right: 18px; }
.wctl:last-child { margin-right: 9px; }
.navbar { display: flex; align-items: center; height: 41px; padding-left: 16px; background: #021f30; border-bottom: 1px solid #07385c; color: #d8c03a; }
.nb { width: 15px; height: 15px; margin-right: 21px; }
.nb.off { opacity: .45; }
.urlbar { display: flex; align-items: center; width: 1332px; height: 32px; margin-left: 107px; padding: 0 7px 0 8px; border-radius: 4px; background: #042c4a; color: #e9a215; }
.u { width: 16px; height: 16px; margin-right: 12px; }
.url { flex: 1; font: 400 14px/34px "Noto Sans", sans-serif; margin-left: -2px; color: #f7ab0d; letter-spacing: .45px; }
.url i { font-style: normal; color: #7a6a31; }
.star { width: 17px; height: 17px; }
.tools { display: flex; gap: 20px; margin-left: 127px; }
.tools svg { width: 16px; height: 16px; }
.ext { position: relative; }
.ext b { position: absolute; left: 6px; top: -12px; width: 14px; height: 12px; background: #fff; border-radius: 1px; }
.tools .ext b svg { width: 14px; height: 12px; }

/* page */
.page { position: relative; display: flex; height: 968px; background: #fff; overflow: hidden; }
.side { display: flex; flex-direction: column; width: 250px; height: 936px; margin: 16px 8px 0 16px; border-radius: 12px; background: linear-gradient(195deg, #42424a, #191919); color: #fff; }
.brand { display: flex; align-items: center; height: 77px; padding-left: 33px; font-size: 14px; font-weight: 700; }
.brand svg { width: 30px; height: 30px; margin-right: 5px; margin-top: 3px; }
hr { width: 100%; height: 1px; margin: 0; border: 0; }
.hr-light { background: linear-gradient(90deg, transparent, #fff8, transparent); }
.hr-dark { background: linear-gradient(90deg, transparent, #0002, transparent); }
nav { padding: 9px 0 0 32px; }
nav a { display: flex; align-items: center; height: 49.800px; font-size: 14px; color: #fffd; }
nav a svg { width: 20px; height: 20px; margin-right: 12px; color: #fff; }
nav a .wide { width: 22px; height: 22px; margin: 0 11px 0 -1px; }
nav h6 { height: 40px; font-size: 12px; line-height: 51px; font-weight: 700; color: #fffc; }
.btn { display: block; border-radius: 8px; text-align: center; font-size: 12px; font-weight: 700; color: #fff; }
.side-foot { display: grid; gap: 16px; margin: auto 16px 16px; }
.demo { height: 42px; line-height: 41px; border: 1px solid #e91e63; color: #e91e63; }
.pro { height: 40px; line-height: 41px; background: linear-gradient(195deg, #ec407a, #d81b60); box-shadow: 0 3px 3px #e91e6326, 0 3px 1px -2px #e91e6333, 0 1px 5px #e91e6326; }

.main { width: 1592px; height: 968px; padding: 0 12px; background: linear-gradient(#f0f2f5, #f0f2f5) 0 0 / 100% 396px no-repeat #fff; }
.head { display: flex; align-items: flex-start; height: 99px; padding: 17px 28px 0; font-size: 14px; }
.crumbs { width: 1000px; margin-top: -1px; color: #344767; }
.crumbs p { line-height: 20px; font-weight: 400; letter-spacing: .05px; }
.crumbs span { color: #8d96a8; font-weight: 300; }
.crumbs em { margin: 0 9px 0 8px; font-style: normal; color: #6c757d; }
.crumbs h6, .chart h6, .list h6, .logs h6 { font-size: 16px; line-height: 26px; font-weight: 700; color: #344767; }
.crumbs h6 { padding-top: 2px; }
.type { width: 198px; height: 41px; padding-left: 15px; border: 1px solid #d2d6da; border-radius: 6px; line-height: 40px; font-weight: 400; }
.builder { width: 127px; height: 34px; margin: 4px 0 0 16px; border: 1px solid #e91e63; border-radius: 8px; line-height: 32px; text-align: center; font-size: 12px; font-weight: 700; color: #e91e63; }
.starlink { margin: 10px 0 0 16px; width: 43px; font: 400 16px/24px "Noto Sans", sans-serif; color: #344767; letter-spacing: -.3px; }
.h-gear { width: 17px; height: 17px; margin-top: 11px; }
.h-bell { width: 13px; height: 14px; margin: 13px 0 0 15px; }
.h-user { width: 13px; height: 14px; margin: 13px 3px 0 7px; }
.sign { font-weight: 700; line-height: 40px; letter-spacing: .1px; }

.card { background: #fff; border-radius: 12px; box-shadow: 0 4px 6px -1px #0000001a, 0 2px 4px -1px #0000000f; }
.stats { display: grid; grid-template-columns: repeat(4, 1fr); gap: 24px; }
.stat { height: 141px; }
.stat-top { display: flex; justify-content: space-between; height: 82px; padding: 0 16px; text-align: right; }
.box { display: grid; place-items: center; width: 64px; height: 64px; margin-top: -16px; border-radius: 12px; color: #fff; }
.box svg { width: 24px; height: 24px; }
.box .big { width: 25px; height: 24px; margin-top: 15px; color: #ffffffcc; }
.stat-top p { padding-top: 12px; font-size: 14px; line-height: 21px; }
.stat-top h4 { font-size: 24px; line-height: 33px; padding-top: 1px; font-weight: 700; color: #344767; }
.foot { padding: 17px 16px 0; font-size: 16px; line-height: 26px; }
.foot b { font-size: 14px; color: #4caf50; }
.dark { background: linear-gradient(195deg, #42424a, #191919); box-shadow: 0 4px 20px #00000024, 0 7px 10px -5px #40404066; }
.pink { background: linear-gradient(195deg, #ec407a, #d81b60); box-shadow: 0 4px 20px #00000024, 0 7px 10px -5px #e91e6366; }
.green { background: linear-gradient(195deg, #66bb6a, #43a047); box-shadow: 0 4px 20px #00000024, 0 7px 10px -5px #4caf5066; }
.blue { background: linear-gradient(195deg, #49a3f1, #1a73e8); box-shadow: 0 4px 20px #00000024, 0 7px 10px -5px #00bcd466; }

.charts { display: grid; grid-template-columns: repeat(3, 1fr); gap: 24px; margin-top: 48px; }
.chart { height: 334px; padding: 0 24px; }
.plot { height: 209px; margin: -24px -8px 25px; border-radius: 8px; }
.chart p { font-size: 14px; line-height: 20px; }
.chart hr { margin: 16px 0 16px; }
.chart .when { display: flex; align-items: center; line-height: 21px; }
.when svg { width: 15px; height: 15px; margin-right: 3px; margin-top: 1px; }

.bottom { display: grid; grid-template-columns: 1036.670px 506.670px; gap: 24px; margin-top: 24px; }
.list, .logs { height: 400px; }
.list-head { display: flex; justify-content: space-between; height: 92px; padding: 25px 48px 0 24px; font-size: 14px; }
.list-head p, .logs p { display: flex; align-items: center; gap: 4px; margin-top: 7px; font-size: 14px; line-height: 21px; }
.check { width: 14px; height: 12px; }
.kebab { width: 4px; height: 14px; margin-top: 19px; }
h3 { font-size: 30px; line-height: 40px; margin-top: 12px; font-weight: 700; color: #344767; letter-spacing: -.82px; }
.add { width: 140px; height: 40px; margin-top: 9px; line-height: 40px; background: #4caf50; box-shadow: 0 3px 3px #4caf5026, 0 3px 1px -2px #4caf5033, 0 1px 5px #4caf5026; }
.filters { display: flex; justify-content: space-between; height: 57px; padding: 16px 0 0 4px; font-size: 14px; font-weight: 400; }
.filters label { display: flex; }
.show { line-height: 26px; gap: 3px; }
.select { display: flex; align-items: center; justify-content: space-between; width: 44px; height: 27px; padding: 0 5px; border: 1px solid #aaa; border-radius: 3px; }
.select svg { width: 9px; height: 6px; }
.search { line-height: 32px; gap: 2px; }
.field { width: 184px; height: 34px; border: 1px solid #aaa; border-radius: 3px; }
table { width: 1037px; table-layout: fixed; border-collapse: collapse; font-size: 16px; font-weight: 400; }
.c1 { width: 47px; } .c2 { width: 171px; } .c3 { width: 121px; } .c4 { width: 301px; } .c5 { width: 149px; } .c6 { width: 154px; } .c7 { width: 94px; }
th { position: relative; height: 47px; padding: 0 10px; border-left: 2px solid #f0f2f5; text-align: left; font-weight: 700; }
th:first-child, td:first-child { padding-left: 9px; }
th:last-child { border-right: 1px solid #f0f2f5; }
th::before, th::after { content: ""; position: absolute; right: 12px; border: 4px solid transparent; }
th::before { top: 10px; border-bottom: 7px solid #e8eaf0; }
th::after { bottom: 12px; border-top: 7px solid #e8eaf0; }
th.asc::before { border-bottom-color: #a9acbc; }
td { height: 64px; padding: 8px 10px 0 11px; border-left: 1px solid #eceef1; background: #f2f2f2; vertical-align: top; white-space: nowrap; line-height: 26px; }
.dl { width: 132px; height: 40px; line-height: 39px; background: #1a73e8; }
.acts { display: flex; }
.acts span { width: 27px; height: 26px; padding: 5px 4px; border: 2px outset #efefef; background: #e9e9ed; color: #000; }
.acts svg { width: 16px; height: 16px; }

.logs { padding: 25px 24px; }
.logs p { gap: 0; }
.up { width: 11px; height: 14px; }
ul { list-style: none; margin-top: 32px; }
li { position: relative; display: flex; height: 61.700px; padding-top: 20px; }
li svg { width: 20px; height: 20px; margin: 3px 19px 0 -2px; color: #4caf50; }
li::before { content: ""; position: absolute; left: 7px; top: -14px; width: 2px; height: 36px; background: #dee2e6; }
li:first-child::before { top: 0; height: 20px; }
li b { display: block; font-size: 14px; line-height: 20px; color: #344767; }
li small { display: block; font-size: 12px; line-height: 18px; margin-top: 4px; font-weight: 700; }
.scrollbar { position: absolute; right: 1px; top: 2px; width: 3px; height: 610px; background: #7a8084; border-radius: 2px; }
.fab { position: absolute; left: 1784px; top: 885px; display: grid; place-items: center; width: 52px; height: 52px; border-radius: 50%; background: #fff; color: #344767; box-shadow: 0 2px 12px #00000029; }
.fab svg { width: 20px; height: 20px; }

/* dock */
.dock { display: flex; flex-direction: column; align-items: center; width: 54px; padding-top: 6px;
  background:
    linear-gradient(155deg, transparent 49.500%, #8a7452 50%, transparent 50.500%) 0 900px / 54px 90px no-repeat,
    linear-gradient(115deg, transparent 49%, #59593f 50% 52%, transparent 53%) 0 870px / 54px 140px no-repeat,
    linear-gradient(140deg, transparent 49%, #1c1014 50%, transparent 51%) 0 840px / 54px 60px no-repeat,
    radial-gradient(26px 14px at 50px 195px, #4a1018, transparent),
    radial-gradient(24px 14px at 0 200px, #451c20, transparent),
    linear-gradient(160deg, transparent 0 30%, #5a4512 34% 42%, transparent 47% 62%, #54420f 66% 72%, transparent 76%) 0 320px / 54px 230px no-repeat,
    linear-gradient(#3b4742 0, #3a4540 130px, #3c4440 200px, #38292f 250px, #463d26 300px, #4f2418 370px, #3d443e 430px, #3c3931 480px, #4b340f 530px, #3f2113 580px, #36130f 600px, #4d1016 640px, #48131a 740px, #4c1c24 800px, #453f3c 850px, #4e1f2c 900px, #55301c 935px, #4f222b 970px, #3a1a20 1053px); }
.app-i { position: relative; display: grid; place-items: center; width: 48px; height: 48px; margin-bottom: 3.900px; border-radius: 10px; }
.app-i > svg { width: 32px; height: 32px; }
.app-i .whale { fill: #fff; }
.sel { background: #ffffff29; }
.run::after { content: ""; position: absolute; right: 0; top: 22px; width: 4px; height: 4px; border-radius: 50%; background: #e95420; }
.rule { width: 32px; height: 1px; margin: 0 0 3px; background: #cfc8bd; }
.grid { width: 22px; height: 22px; margin-top: auto; margin-bottom: 19px; }
```
